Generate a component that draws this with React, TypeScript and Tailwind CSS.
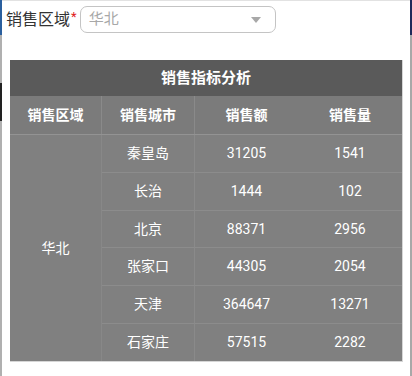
import React from "react";

const rows = [
  ["秦皇岛", "31205", "1541"],
  ["长治", "1444", "102"],
  ["北京", "88371", "2956"],
  ["张家口", "44305", "2054"],
  ["天津", "364647", "13271"],
  ["石家庄", "57515", "2282"],
];

const font = { fontFamily: 'Roboto, "Noto Sans CJK SC", sans-serif' };

export default function App() {
  return (
    <div className="w-[412px] h-[376px] bg-white flex overflow-hidden" style={font}>
      <div className="w-[2px] flex flex-col shrink-0">
        <div className="h-[35px] bg-[#2a5f9e]" />
        <div className="h-[48px] bg-[#b0b0b0]" />
        <div className="h-[38px] bg-[#222]" />
        <div className="flex-1 bg-[#b0b0b0]" />
      </div>
      <div className="flex-1 flex flex-col border-t border-[#e2e2e2]">
        <div className="flex items-center h-[31px] pl-[4px] mt-[3px]">
          <span className="text-[16px] text-[#333] leading-none">销售区域</span>
          <span className="text-[#e02020] text-[13px] leading-none self-start mt-[6px] ml-[1px]">*</span>
          <div className="ml-[3px] w-[196px] h-[27px] border border-[#c4c4c4] rounded-[7px] flex items-center justify-between pl-[8px] pr-[14px]">
            <span className="text-[15px] text-[#a8a8a8] leading-none">华北</span>
            <svg width="10" height="6" viewBox="0 0 10 6">
              <path d="M0 0 L10 0 L5 6 Z" fill="#a8a8a8" />
            </svg>
          </div>
        </div>
        <div className="ml-[8px] mt-[25px] w-[393px] border-r border-b border-[#d6d6d6] text-white">
          <div className="h-[36px] bg-[#5a5a5a] flex items-center justify-center text-[15px] font-bold">
            销售指标分析
          </div>
          <div className="grid grid-cols-[92px_93px_103px_104px] h-[39px] bg-[#7b7b7b] text-[14px] font-bold border-b border-[#939393]">
            <div className="flex items-center justify-center border-r border-[#8a8a8a]">销售区域</div>
            <div className="flex items-center justify-center border-r border-[#8a8a8a]">销售城市</div>
            <div className="flex items-center justify-center">销售额</div>
            <div className="flex items-center justify-center">销售量</div>
          </div>
          <div className="grid grid-cols-[92px_93px_103px_104px] grid-rows-[38px_38px_37px_38px_38px_37px] bg-[#808080] text-[14px]">
            <div className="row-span-6 flex items-center justify-center border-r border-[#888]" style={{ gridRow: "1 / span 6" }}>
              华北
            </div>
            {rows.map((r, i) => (
              <React.Fragment key={i}>
                <div className={`flex items-center justify-center border-r border-[#8a8a8a] ${i < 5 ? "border-b border-b-[#8c8c8c]" : ""}`}>{r[0]}</div>
                <div className={`flex items-center justify-center ${i < 5 ? "border-b border-b-[#8c8c8c]" : ""}`}>{r[1]}</div>
                <div className={`flex items-center justify-center ${i < 5 ? "border-b border-b-[#8c8c8c]" : ""}`}>{r[2]}</div>
              </React.Fragment>
            ))}
          </div>
        </div>
      </div>
      <div className="w-[2px] flex flex-col shrink-0">
        <div className="h-[35px] bg-[#1f2a5a]" />
        <div className="flex-1 bg-[#a8a8a8]" />
      </div>
    </div>
  );
}
